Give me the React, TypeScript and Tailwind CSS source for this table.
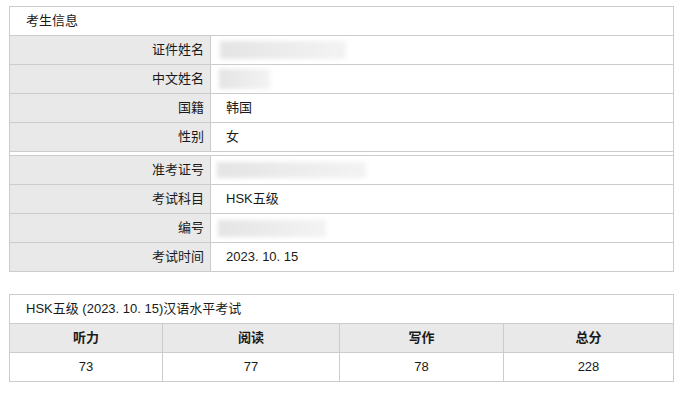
import React from 'react';

const font = 'font-["Liberation_Sans","Noto_Sans_CJK_SC",sans-serif]';

const Blur = ({ w, h }: { w: string; h: string }) => (
  <div className={`${w} ${h} bg-linear-to-r from-[#e4e4e4] via-[#ececec] to-[#f3f3f3] blur-[2px]`} />
);

const InfoRow = ({ label, value, last }: { label: string; value: React.ReactNode; last?: boolean }) => (
  <div className={`flex ${last ? 'h-[28px]' : 'h-[29px] border-b border-[#cccccc]'}`}>
    <div className="w-[201px] shrink-0 bg-[#e9e9e9] border-r border-[#cccccc] flex items-center justify-end pr-[6px]">
      {label}
    </div>
    <div className="flex-1 flex items-center pl-[15px]">{value}</div>
  </div>
);

const App = () => {
  const scores = [
    { name: '听力', score: 73, w: 'w-[153px]' },
    { name: '阅读', score: 77, w: 'w-[177px]' },
    { name: '写作', score: 78, w: 'w-[164px]' },
    { name: '总分', score: 228, w: 'flex-1' },
  ];

  return (
    <div className={`${font} text-[13px] text-[#1a1a1a] bg-white min-h-[397px] px-[9px] pt-[6px]`}>
      {/* 考生信息 */}
      <div className="border border-[#cccccc]">
        <div className="h-[29px] border-b border-[#cccccc] flex items-center pl-[16px]">考生信息</div>
        <InfoRow label="证件姓名" value={<div className="-ml-[6px]"><Blur w="w-[126px]" h="h-[18px]" /></div>} />
        <InfoRow label="中文姓名" value={<div className="-ml-[7px]"><Blur w="w-[51px]" h="h-[20px]" /></div>} />
        <InfoRow label="国籍" value="韩国" />
        <InfoRow label="性别" value="女" />
        <div className="h-[4px] border-b border-[#cccccc]" />
        <InfoRow label="准考证号" value={<div className="-ml-[9px]"><Blur w="w-[149px]" h="h-[16px]" /></div>} />
        <InfoRow label="考试科目" value="HSK五级" />
        <InfoRow label="编号" value={<div className="-ml-[8px]"><Blur w="w-[108px]" h="h-[17px]" /></div>} />
        <InfoRow label="考试时间" value="2023. 10. 15" last />
      </div>

      {/* 成绩 */}
      <div className="mt-[22px] border border-[#cccccc]">
        <div className="h-[29px] border-b border-[#cccccc] flex items-center pl-[16px]">
          HSK五级 (2023. 10. 15)汉语水平考试
        </div>
        <div className="flex h-[29px] border-b border-[#cccccc] bg-[#e9e9e9] font-bold">
          {scores.map((s, i) => (
            <div
              key={s.name}
              className={`${s.w} flex items-center justify-center ${i < scores.length - 1 ? 'border-r border-[#cccccc]' : ''}`}
            >
              {s.name}
            </div>
          ))}
        </div>
        <div className="flex h-[28px]">
          {scores.map((s, i) => (
            <div
              key={s.name}
              className={`${s.w} flex items-center justify-center ${i < scores.length - 1 ? 'border-r border-[#cccccc]' : ''}`}
            >
              {s.score}
            </div>
          ))}
        </div>
      </div>
    </div>
  );
};

export default App;
